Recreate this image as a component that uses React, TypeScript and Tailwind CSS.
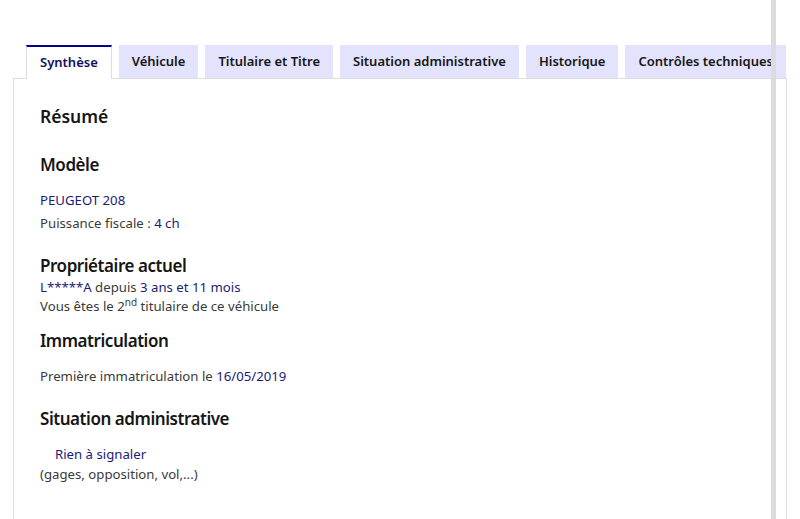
import { FC } from "react";

const tabs = [
    "Synthèse",
    "Véhicule",
    "Titulaire et Titre",
    "Situation administrative",
    "Historique",
    "Contrôles techniques",
];

const Blue: FC<{ children: React.ReactNode }> = ({ children }) => (
    <span className="text-[#1b1b78]">{children}</span>
);

const App: FC = () => {
    return (
        <div
            className="relative h-[519px] w-full overflow-hidden bg-white px-[13px] pt-[45px] text-[#161616]"
            style={{ fontFamily: '"Noto Sans", Arial, sans-serif' }}
        >
            <ul className="relative z-10 flex gap-[7px] pl-[13px]">
                {tabs.map((tab, i) =>
                    i === 0 ? (
                        <li
                            key={tab}
                            className="-mb-px flex h-[34px] items-center border-x border-t-2 border-x-[#dddddd] border-t-[#000091] bg-white px-[13px] text-[13px] font-semibold whitespace-nowrap text-[#101060]"
                        >
                            {tab}
                        </li>
                    ) : (
                        <li
                            key={tab}
                            className="flex h-[33px] items-center bg-[#e3e3fd] px-[13px] text-[13px] font-semibold whitespace-nowrap text-[#161616]"
                        >
                            {tab}
                        </li>
                    )
                )}
            </ul>

            <section className="h-[500px] border border-[#dddddd] px-[26px] pt-[25px] text-[13.2px]">
                <h2 className="text-[17.5px] leading-[24px] font-semibold">Résumé</h2>

                <h3 className="mt-[25px] text-[17px] leading-[24px] font-semibold tracking-[-0.45px]">Modèle</h3>
                <p className="mt-[12px] leading-[23px]">
                    <Blue>PEUGEOT 208</Blue>
                </p>
                <p className="leading-[23px] text-[#3a3a3a]">
                    Puissance fiscale : <Blue>4 ch</Blue>
                </p>

                <h3 className="mt-[20px] text-[17px] leading-[22px] font-semibold tracking-[-0.45px]">
                    Propriétaire actuel
                </h3>
                <p className="leading-[20px] text-[#3a3a3a]">
                    <Blue>L*****A</Blue> depuis <Blue>3 ans et 11 mois</Blue>
                </p>
                <p className="leading-[19px] text-[#3a3a3a]">
                    Vous êtes le 2<sup className="text-[10px]">nd</sup> titulaire de ce véhicule
                </p>

                <h3 className="mt-[13px] text-[17px] leading-[24px] font-semibold tracking-[-0.45px]">
                    Immatriculation
                </h3>
                <p className="mt-[13px] leading-[20px] text-[#3a3a3a]">
                    Première immatriculation le <Blue>16/05/2019</Blue>
                </p>

                <h3 className="mt-[21px] text-[17px] leading-[24px] font-semibold tracking-[-0.45px]">
                    Situation administrative
                </h3>
                <p className="mt-[13px] pl-[15px] leading-[20px]">
                    <Blue>Rien à signaler</Blue>
                </p>
                <p className="leading-[20px] text-[#3a3a3a]">(gages, opposition, vol,...)</p>
            </section>

            {/* window scrollbar track */}
            <div className="absolute top-0 left-[771px] z-20 h-full w-[5px] bg-[#dcdcdc]" />
        </div>
    );
};

export default App;
